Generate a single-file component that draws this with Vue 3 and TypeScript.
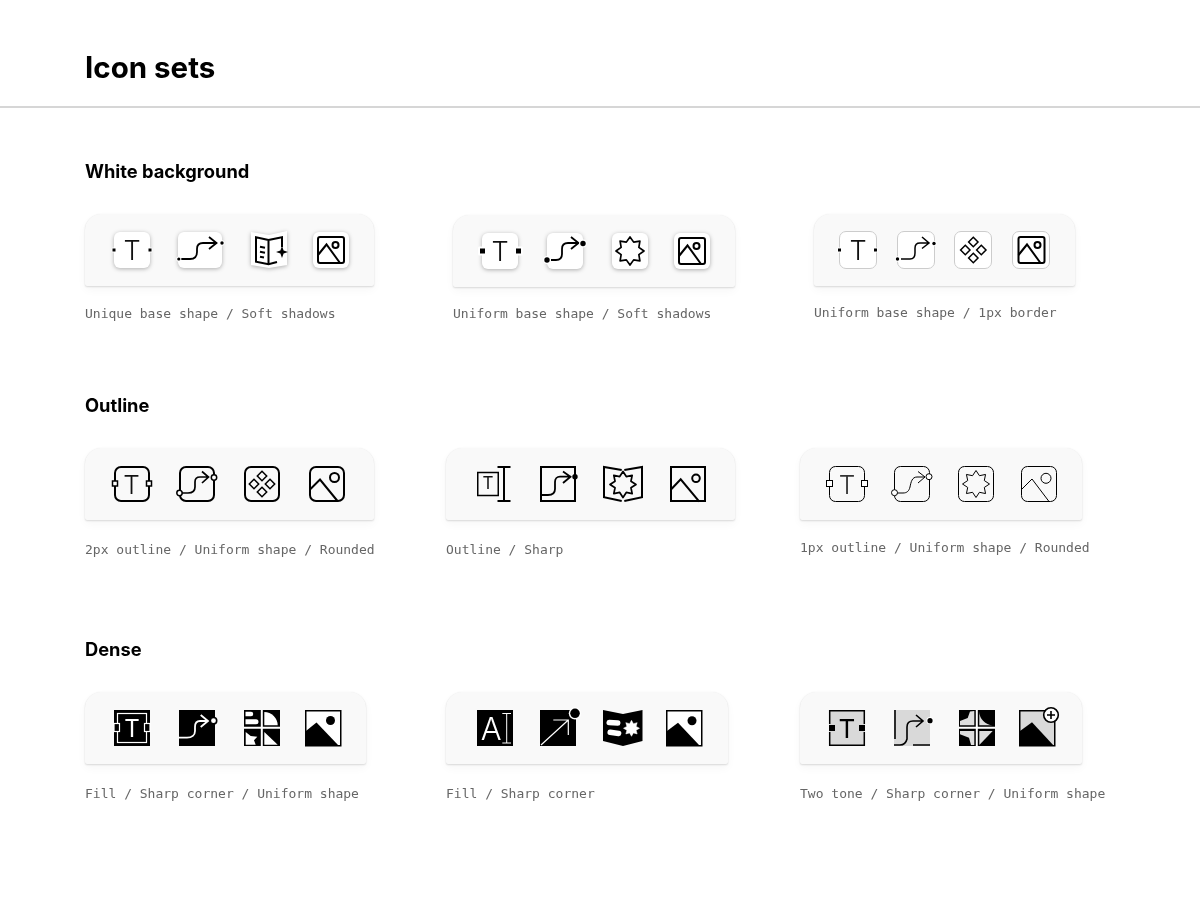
<script setup lang="ts">
interface Icon { x: number; body: string }
interface Card { x: number; w: number; top: number; capGap: number; caption: string; icons: Icon[] }
interface Section { title: string; after: number; cards: Card[] }

const K = '#000'
const txt = (c: string, x: number, y: number, size: number, weight: number, fill: string) =>
  `<text x="${x}" y="${y}" font-family="Inter, sans-serif" font-size="${size}" font-weight="${weight}" text-anchor="middle" fill="${fill}">${c}</text>`
const line = (d: string, w = 1.5, s = K) =>
  `<path d="${d}" fill="none" stroke="${s}" stroke-width="${w}" stroke-linejoin="miter"/>`
const softBox = (x: number, y: number, w: number, h: number) =>
  `<rect class="soft" x="${x}" y="${y}" width="${w}" height="${h}" rx="6" fill="#fff"/>`
const borderBox = (x = 0.5, w = 37) =>
  `<rect x="${x}" y="-0.5" width="${w}" height="37" rx="6.5" fill="#fff" stroke="#ccc"/>`
const sq = (cx: number, cy: number, s: number, halo = 0) =>
  (halo ? `<rect x="${cx - s / 2 - halo}" y="${cy - s / 2 - halo}" width="${s + 2 * halo}" height="${s + 2 * halo}" rx="1.5" fill="#fff"/>` : '') +
  `<rect x="${cx - s / 2}" y="${cy - s / 2}" width="${s}" height="${s}" fill="${K}"/>`
const dot = (cx: number, cy: number, r: number, halo = 0) =>
  (halo ? `<circle cx="${cx}" cy="${cy}" r="${r + halo}" fill="#fff"/>` : '') + `<circle cx="${cx}" cy="${cy}" r="${r}" fill="${K}"/>`
const ring = (cx: number, cy: number, r: number, w = 1.5) =>
  `<circle cx="${cx}" cy="${cy}" r="${r}" fill="#fff" stroke="${K}" stroke-width="${w}"/>`
const node = (cx: number, cy: number, s: number, w: number) =>
  `<rect x="${cx - s / 2}" y="${cy - s / 2}" width="${s}" height="${s}" fill="#fff" stroke="${K}" stroke-width="${w}"/>`
const pts = (cx: number, cy: number, R: number, r: number, n = 8) => {
  const out: string[] = []
  for (let i = 0; i < n * 2; i++) {
    const a = (Math.PI * i) / n - Math.PI / 2
    const q = i % 2 ? r : R
    out.push(`${(cx + q * Math.cos(a)).toFixed(2)},${(cy + q * Math.sin(a)).toFixed(2)}`)
  }
  return out.join(' ')
}
const star = (cx: number, cy: number, R: number, r: number, w = 1.5, fill = 'none', stroke = K) =>
  `<polygon points="${pts(cx, cy, R, r)}" fill="${fill}" stroke="${stroke}" stroke-width="${w}" stroke-linejoin="round"/>`
const diamonds = (cx: number, cy: number, off: number, h: number, w = 1.5) =>
  [[0, -off], [off, 0], [0, off], [-off, 0]]
    .map(([dx, dy]) => {
      const x = cx + dx, y = cy + dy
      return `<polygon points="${x},${y - h} ${x + h},${y} ${x},${y + h} ${x - h},${y}" fill="none" stroke="${K}" stroke-width="${w}"/>`
    })
    .join('')
const frameImage = (fx: number, fy: number, size: number, w: number, rx: number, c: [number, number, number]) =>
  `<rect x="${fx}" y="${fy}" width="${size}" height="${size}" rx="${rx}" fill="none" stroke="${K}" stroke-width="${w}"/>` +
  `<circle cx="${c[0]}" cy="${c[1]}" r="${c[2]}" fill="none" stroke="${K}" stroke-width="${w}"/>`
const softImage = () =>
  softBox(0, 0, 36, 36) + frameImage(5, 5, 26, 2, 2, [22.5, 13, 3]) + line('M5 23 L13.5 12.5 L27 31', 2)
const roundFrame = (w: number) => {
  const o = w / 2
  return `<rect x="${o}" y="${o}" width="${36 - w}" height="${36 - w}" rx="6" fill="none" stroke="${K}" stroke-width="${w}"/>`
}

const sections: Section[] = [
  {
    title: 'White background', after: 71,
    cards: [
      {
        x: 85, w: 289, top: 0, capGap: 20, caption: 'Unique base shape / Soft shadows',
        icons: [
          { x: 114, body: softBox(0, 0, 36, 36) + txt('T', 18, 28, 27, 300, '#111') + sq(0, 18, 3, 1) + sq(36, 18, 3, 1) },
          { x: 178, body: softBox(0, 0, 44, 36) + line('M3 27 H12 C17 27 19 25 19 20 V17 C19 13 21 11 25 11 H38.5 M31 5 L38.5 11 L31 17', 1.8) + dot(0.8, 27, 1.6, 1) + dot(44, 11, 1.7, 1) },
          {
            x: 251,
            body:
              `<polygon class="soft" points="0,0 18,3 36,-1 36,33 18,36 0,33" fill="#fff"/>` +
              line('M17.5 8 L5 5.3 V29.7 L17.5 32.3 L26 30 M17.5 8 L31 5.3 V15 M17.5 8 V32.3 M9 14.7 L14 15.7 M9 19.7 L14 20.7 M9 24.7 L13 25.5', 2) +
              `<polygon points="31,14 32.6,18.4 37,20 32.6,21.6 31,26 29.4,21.6 25,20 29.4,18.4" fill="${K}"/>`
          },
          { x: 313, body: softImage() }
        ]
      },
      {
        x: 453, w: 282, top: 1, capGap: 19, caption: 'Uniform base shape / Soft shadows',
        icons: [
          { x: 482, body: softBox(0, 0, 36, 36) + txt('T', 18, 28, 27, 300, '#111') + sq(0.5, 18, 5, 2) + sq(36.5, 18, 5, 2) },
          { x: 547, body: softBox(0, 0, 36, 36) + line('M4 27 H9 C13 27 15 25 15 21 V16 C15 12 17 10 21 10 H31.5 M24 4 L31.5 10 L24 16', 1.8) + dot(0, 27, 2.7, 1.2) + dot(36, 10.5, 2.7, 1.2) },
          { x: 612, body: softBox(0, 0, 36, 36) + star(18, 18, 14, 9.6, 1.7) },
          { x: 674, body: softImage() }
        ]
      },
      {
        x: 814, w: 261, top: 0, capGap: 19, caption: 'Uniform base shape / 1px border',
        icons: [
          { x: 839, body: borderBox() + txt('T', 19, 28, 27, 300, '#111') + sq(0.5, 18, 3, 1) + sq(36.5, 18, 3, 1) },
          { x: 897, body: borderBox() + line('M4 27 H13 C16 27 18 25 18 21 V16 C18 13 20 11 23 11 H32 M25 5 L32 11 L25 16.5', 1.5) + dot(0.5, 27, 1.7, 1) + dot(37, 11.5, 1.7, 1) },
          { x: 954, body: borderBox() + diamonds(19.3, 18, 8, 4.7, 1.5) },
          { x: 1012, body: borderBox() + frameImage(6.5, 5, 26, 2, 2, [25.5, 13, 3]) + line('M6.5 23 L15 12.5 L28.5 31', 2) }
        ]
      }
    ]
  },
  {
    title: 'Outline', after: 79,
    cards: [
      {
        x: 85, w: 289, top: 0, capGap: 22, caption: '2px outline / Uniform shape / Rounded',
        icons: [
          { x: 114, body: roundFrame(2) + txt('T', 17.5, 28, 26, 300, '#111') + node(1, 17.5, 5, 1.5) + node(35, 17.5, 5, 1.5) },
          { x: 179, body: roundFrame(2) + line('M3 27 H9 C13 27 16 25 16 21 V16 C16 13 18 11 21 11 H29.5 M23 5.5 L29.5 11 L23 17', 1.7) + ring(0.5, 27, 2.7) + ring(35, 11.5, 2.7) },
          { x: 244, body: roundFrame(2) + diamonds(18, 18, 8, 4.7, 1.5) },
          { x: 309, body: roundFrame(2) + `<circle cx="25.5" cy="11.5" r="4.5" fill="none" stroke="${K}" stroke-width="2"/>` + line('M1 23.5 L11 13.5 L28.5 35', 2) }
        ]
      },
      {
        x: 446, w: 289, top: 0, capGap: 22, caption: 'Outline / Sharp',
        icons: [
          { x: 477, body: `<rect x="0.75" y="6.5" width="20.5" height="23" fill="none" stroke="${K}" stroke-width="1.5"/>` + txt('T', 11, 23, 17, 400, '#111') + line('M20.5 1 H33.5 M27 1 V35 M20.5 35 H33.5', 2) },
          { x: 540, body: `<path d="M1 1 H35 V35 H1 Z" fill="none" stroke="${K}" stroke-width="2"/>` + line('M1 29 H8 C12 29 15 27 15 23 V16 C15 13 17 10.7 20 10.7 H31 M23 5.5 L30.5 10.7 L23 17', 1.8) + dot(35, 10.7, 2.7, 0) },
          {
            x: 603,
            body:
              line('M18.7 4 L1 1 V31.3 L18.7 35 M21.3 4 L39 1 V31.3 L21.3 35', 2) + star(20, 18.5, 13, 8.6, 1.7)
          },
          { x: 670, body: `<path d="M1 1 H35 V35 H1 Z" fill="none" stroke="${K}" stroke-width="2"/>` + `<circle cx="26" cy="12.3" r="3.8" fill="none" stroke="${K}" stroke-width="2"/>` + line('M1 23.5 L10.7 13.3 L29.3 35.7', 2) }
        ]
      },
      {
        x: 800, w: 282, top: 0, capGap: 20, caption: '1px outline / Uniform shape / Rounded',
        icons: [
          { x: 829, body: roundFrame(1) + txt('T', 18, 28, 26, 300, '#333') + node(0.5, 17.5, 6, 1) + node(35.5, 17.5, 6, 1) },
          { x: 894, body: roundFrame(1) + line('M3 27 H9 C13 27 15 25 16 21 C17 16 18 11 23 11 H31 M24 5.5 L31 11 L24 17', 1) + ring(0.5, 26.7, 3, 1) + ring(35, 10.7, 3, 1) },
          { x: 958, body: roundFrame(1) + star(18, 18, 13.5, 9, 1) },
          { x: 1021, body: roundFrame(1) + `<circle cx="25" cy="12.3" r="5" fill="none" stroke="${K}"/>` + line('M0.5 23.5 L11 13 L28 35.5', 1) }
        ]
      }
    ]
  },
  {
    title: 'Dense', after: 0,
    cards: [
      {
        x: 85, w: 281, top: 0, capGap: 22, caption: 'Fill / Sharp corner / Uniform shape',
        icons: [
          {
            x: 114,
            body:
              `<rect width="36" height="36" fill="${K}"/><rect x="3.5" y="3.5" width="29" height="29" fill="none" stroke="#fff" stroke-width="1.2"/>` +
              `<rect x="0" y="13.5" width="5.5" height="8" fill="${K}" stroke="#fff" stroke-width="1.2"/><rect x="30.5" y="13.5" width="5.5" height="8" fill="${K}" stroke="#fff" stroke-width="1.2"/>` +
              txt('T', 18, 27, 24, 400, '#fff')
          },
          {
            x: 179,
            body:
              `<rect width="36" height="36" fill="${K}"/>` +
              line('M0 27.7 H8 C13 27.7 16 25 16 21 V17 C16 13 18 11 21 11 H29 M21.7 5 L29 11 L21.7 17', 1.8, '#fff') + ring(34.5, 10.7, 3.2, 1.6)
          },
          {
            x: 244,
            body:
              `<rect width="36" height="36" fill="${K}"/><path d="M16.8 0 H18.8 V36 H16.8 Z M0 16.8 H36 V18.8 H0 Z" fill="#fff"/>` +
              `<path d="M1.5 1.7 H7 A2.2 2.2 0 0 1 7 6.2 H1.5 Z M1.5 9.3 H12 A2.5 2.5 0 0 1 12 14.3 H1.5 Z" fill="#fff"/>` +
              `<path d="M20.3 2 A13.4 13.4 0 0 1 33.7 15.3 H20.3 Z" fill="#fff"/>` +
              `<polygon points="1.7,22 6.7,26 13.3,26.7 10,30.3 11.7,34.7 1.7,34.7" fill="#fff"/>` +
              `<polygon points="20.3,22 33.7,34.7 20.3,34.7" fill="#fff"/>`
          },
          {
            x: 305,
            body:
              `<rect x="0.75" y="0.75" width="35" height="35" fill="#fff" stroke="${K}" stroke-width="1.5"/>` + dot(25.5, 10.5, 4.5) +
              `<path d="M0 21.7 L11.5 12.5 L33.5 35.5 V36 H0 Z" fill="${K}"/>`
          }
        ]
      },
      {
        x: 446, w: 282, top: 0, capGap: 22, caption: 'Fill / Sharp corner',
        icons: [
          {
            x: 477,
            body:
              `<rect width="36" height="36" fill="${K}"/>` + txt('A', 14.3, 30, 31, 300, '#fff') + line('M25.3 3.5 H34 M29.7 3.5 V33 M25.3 33 H34', 1, '#fff')
          },
          {
            x: 540,
            body:
              `<rect width="36" height="36" fill="${K}"/>` + line('M1 35 L28.3 10 M13.3 10 H28.3 V25', 1.2, '#fff') +
              `<circle cx="35" cy="3.3" r="6.2" fill="#fff"/><circle cx="35" cy="3.3" r="4.8" fill="${K}"/>`
          },
          {
            x: 603,
            body:
              `<path d="M0 0 L20 4 L39.5 0 V31 L20 36 L0 31 Z" fill="${K}"/>` +
              `<rect x="3.5" y="10" width="14" height="5.5" rx="2.7" fill="#fff" transform="rotate(3 10 12)"/><rect x="4.5" y="20" width="14" height="5.5" rx="2.7" fill="#fff" transform="rotate(8 11 22)"/>` +
              star(28.5, 18.3, 8, 5, 0.5, '#fff', '#fff')
          },
          {
            x: 666,
            body:
              `<rect x="0.75" y="0.75" width="35" height="35" fill="#fff" stroke="${K}" stroke-width="1.5"/>` + dot(26, 10.7, 4.5) +
              `<path d="M0 21.7 L12 12.7 L33.5 35.5 V36 H0 Z" fill="${K}"/>`
          }
        ]
      },
      {
        x: 800, w: 282, top: 0, capGap: 22, caption: 'Two tone / Sharp corner / Uniform shape',
        icons: [
          {
            x: 829,
            body:
              `<rect width="36" height="36" fill="#d9d9d9"/>` +
              line('M0.7 14 V0.7 H35.3 V14 M0.7 22 V35.3 H35.3 V22', 1.5) +
              `<rect x="0" y="15" width="6" height="6" fill="${K}"/><rect x="30" y="15" width="6" height="6" fill="${K}"/>` + txt('T', 18, 27.5, 26, 400, '#000')
          },
          {
            x: 894,
            body:
              `<rect width="36" height="36" fill="#d9d9d9"/>` +
              line('M1 0 V29 M0 35 H6 C10 35 12 33 13 29 V17 C13 13 15 11 19 11 H29 M22 5 L29 11 L22 17 M19 35 H36', 1.6) + dot(36, 10.7, 2.6, 1)
          },
          {
            x: 959,
            body:
              `<rect width="36" height="36" fill="${K}"/><path d="M16.8 0 H18.8 V36 H16.8 Z M0 16.8 H36 V18.8 H0 Z" fill="#fff"/>` +
              `<polygon points="15.3,1 15.3,15.3 1,15.3 1,11 8.7,8 11,1.5" fill="#ddd"/>` +
              `<path d="M20.3 1.5 V15.3 H33.7 A14 14 0 0 1 20.3 1.5 Z" fill="#ddd"/>` +
              `<polygon points="1,21 15.3,21 15.3,35 12,35 10,27.7 1,24.3" fill="#ddd"/>` +
              `<polygon points="20.3,21 33.7,21 20.3,35" fill="#ddd"/>`
          },
          {
            x: 1019,
            body:
              `<rect x="0.75" y="0.75" width="35" height="35" fill="#d9d9d9" stroke="${K}" stroke-width="1.5"/>` +
              `<path d="M0 21.7 L13 12.3 L34.8 35.7 V36 H0 Z" fill="${K}"/>` +
              `<circle cx="32" cy="5" r="7.3" fill="#fff" stroke="${K}" stroke-width="1.6"/>` +
              line('M28 5 H36 M32 1 V9', 1.6)
          }
        ]
      }
    ]
  }
]

function groupMargin(cards: Card[], i: number): string {
  const prevEnd = i === 0 ? 85 : cards[i - 1].x + cards[i - 1].w
  return `${cards[i].x - prevEnd}px`
}
function iconMargin(card: Card, i: number): string {
  const prevEnd = i === 0 ? card.x : card.icons[i - 1].x + 36
  return `${card.icons[i].x - prevEnd}px`
}
</script>

<template>
  <div class="page">
    <header class="head">
      <h1>Icon sets</h1>
    </header>
    <main class="content">
      <section v-for="s in sections" :key="s.title" class="section" :style="{ marginBottom: s.after + 'px' }">
        <h2>{{ s.title }}</h2>
        <div class="row">
          <div
            v-for="(c, i) in s.cards"
            :key="c.caption"
            class="group"
            :style="{ width: c.w + 'px', marginLeft: groupMargin(s.cards, i), paddingTop: c.top + 'px' }"
          >
            <div class="card">
              <svg
                v-for="(ic, j) in c.icons"
                :key="j"
                class="icon"
                viewBox="0 0 36 36"
                width="36"
                height="36"
                :style="{ marginLeft: iconMargin(c, j) }"
                v-html="ic.body"
              ></svg>
            </div>
            <p class="caption" :style="{ marginTop: c.capGap + 'px' }">{{ c.caption }}</p>
          </div>
        </div>
      </section>
    </main>
  </div>
</template>

<style scoped>
.page {
  width: 1200px;
  height: 914px;
  background: #fff;
  overflow: hidden;
  font-family: Inter, sans-serif;
  color: #000;
}
.head {
  height: 106px;
  border-bottom: 2px solid #d6d6d6;
  padding-left: 85px;
}
h1 {
  margin: 0;
  padding-top: 49px;
  font-size: 29.5px;
  line-height: 36px;
  font-weight: 700;
  will-change: transform;
}
.content {
  padding: 51px 0 0 85px;
}
h2 {
  margin: 0 0 31px;
  font-size: 18.3px;
  line-height: 24px;
  font-weight: 700;
  height: 24px;
  will-change: transform;
}
.section {
  display: flex;
  flex-direction: column;
}
.row {
  display: flex;
}
.group {
  flex: none;
  box-sizing: border-box;
}
.card {
  height: 72px;
  display: flex;
  align-items: center;
  background: #f9f9f9;
  border-radius: 16px 16px 2px 2px;
  box-shadow: 0 1px 2px rgba(0, 0, 0, 0.13), 0 4px 10px rgba(0, 0, 0, 0.035), 0 0 1px rgba(0, 0, 0, 0.06);
}
.icon {
  flex: none;
  overflow: visible;
  display: block;
  will-change: transform;
}
.icon :deep(.soft) {
  filter: drop-shadow(0 1px 2px rgba(0, 0, 0, 0.3));
}
.caption {
  margin: 0;
  font-family: "DejaVu Sans Mono", monospace;
  font-size: 13px;
  line-height: 16px;
  color: #666;
  white-space: nowrap;
  will-change: transform;
}
</style>
